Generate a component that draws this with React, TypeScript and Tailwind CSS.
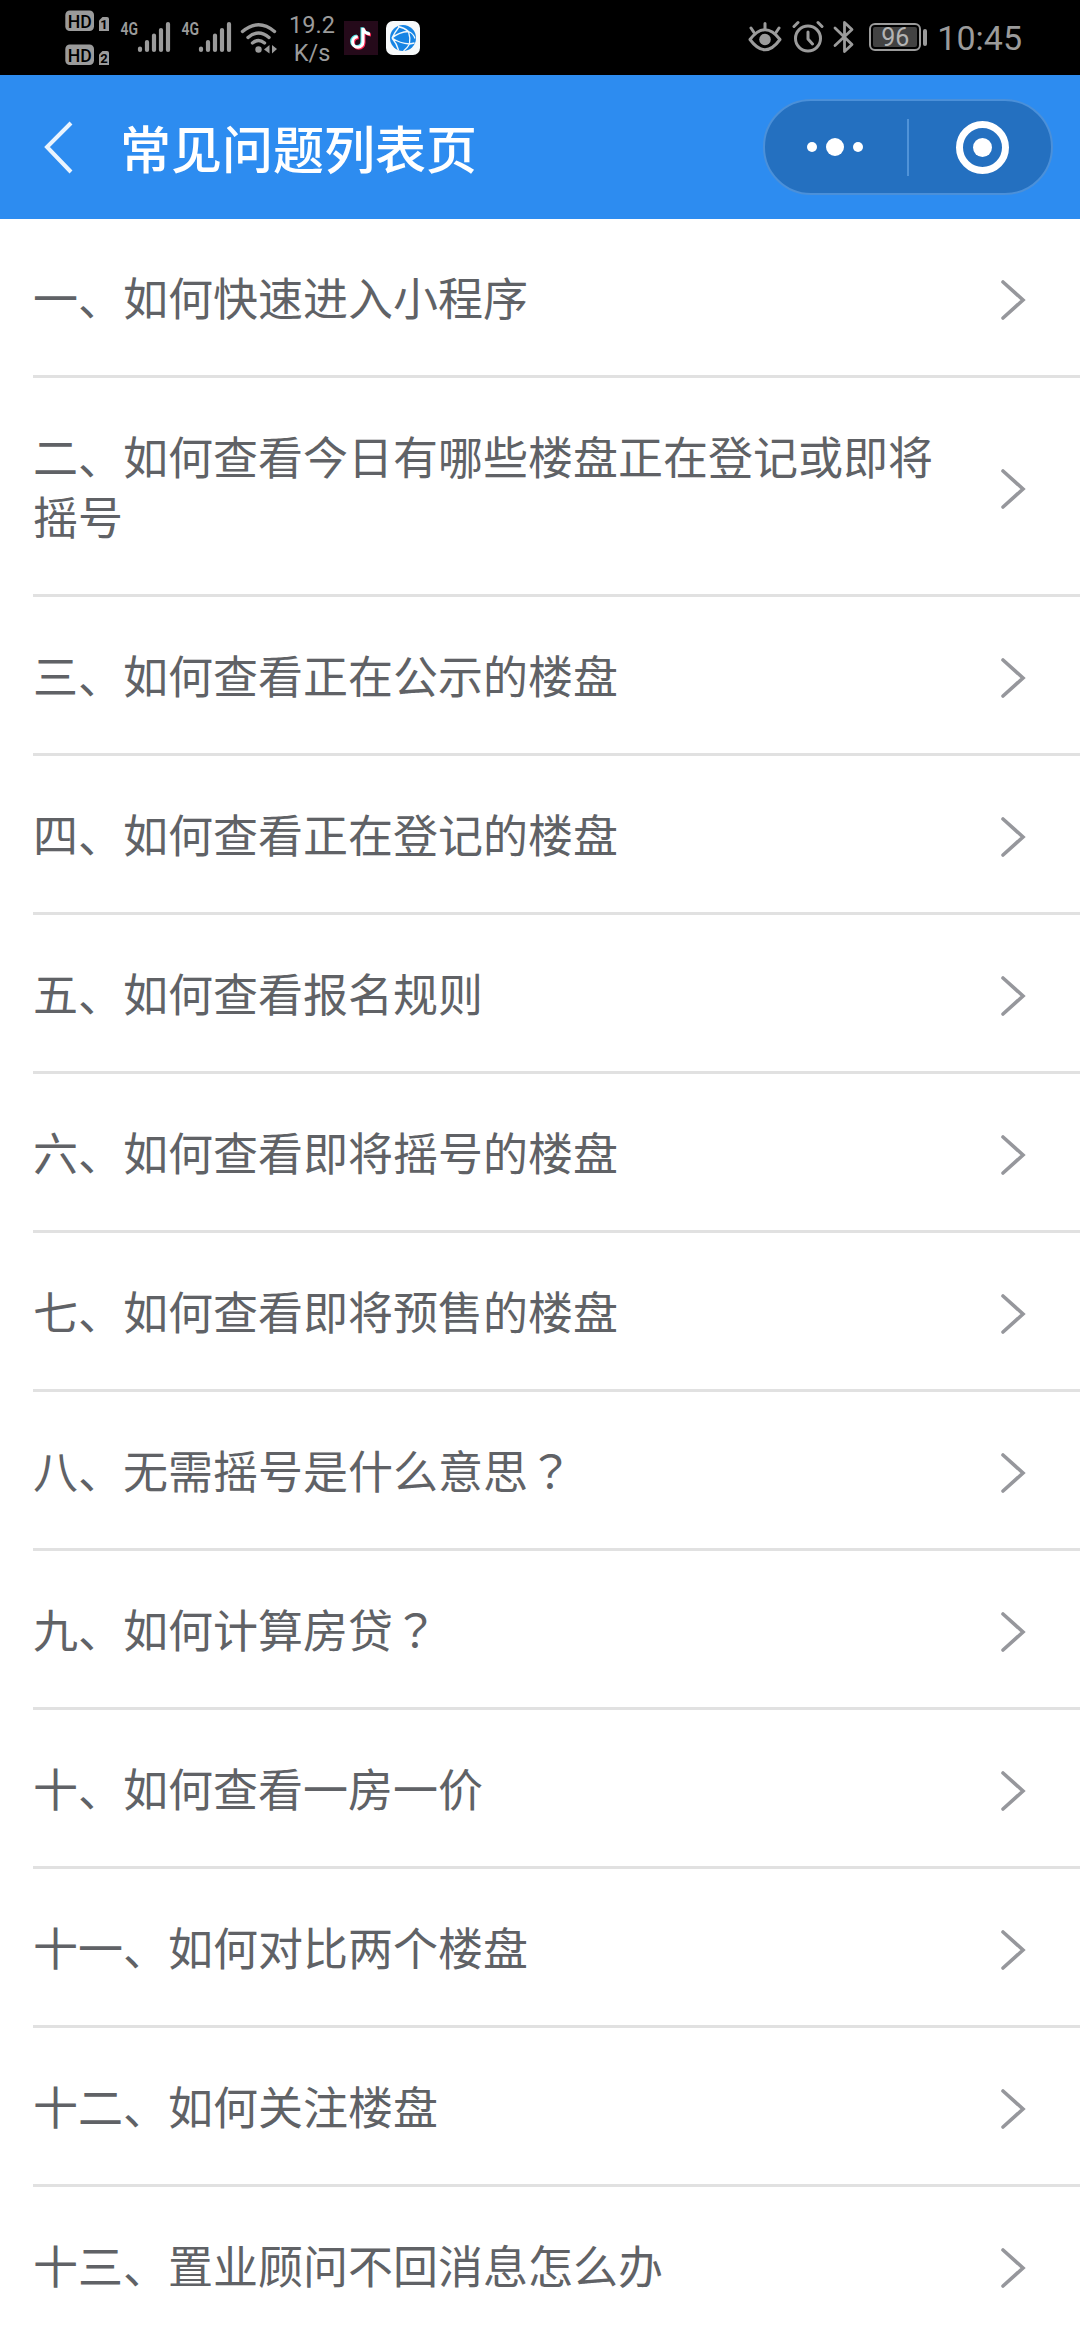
const QUESTIONS = [
  "一、如何快速进入小程序",
  "二、如何查看今日有哪些楼盘正在登记或即将摇号",
  "三、如何查看正在公示的楼盘",
  "四、如何查看正在登记的楼盘",
  "五、如何查看报名规则",
  "六、如何查看即将摇号的楼盘",
  "七、如何查看即将预售的楼盘",
  "八、无需摇号是什么意思？",
  "九、如何计算房贷？",
  "十、如何查看一房一价",
  "十一、如何对比两个楼盘",
  "十二、如何关注楼盘",
  "十三、置业顾问不回消息怎么办",
];

function HdBadge({ sim }: { sim: string }) {
  return (
    <svg width="45" height="22" viewBox="0 0 45 22">
      <rect x="0.3" y="0.5" width="28.7" height="20.5" rx="4.5" fill="#9b9b9b" />
      <text x="14.7" y="17.5" textAnchor="middle" fontSize="19" fontWeight="500" textLength="24" lengthAdjust="spacingAndGlyphs" fill="#000">
        HD
      </text>
      <path d="M34 10.5 37.5 7H42q2 0 2 2v12H34z" fill="#9b9b9b" />
      <text x="39" y="19" textAnchor="middle" fontSize="13" fontWeight="700" fill="#000">
        {sim}
      </text>
    </svg>
  );
}

function Signal() {
  return (
    <svg width="51" height="40" viewBox="0 -6 51 40">
      <text x="0.5" y="15" fontSize="18.5" fontWeight="600" textLength="17.5" lengthAdjust="spacingAndGlyphs" fill="#9b9b9b">
        4G
      </text>
      <path d="M20 28.500v1.500M27 22v8M34 15.500v14.500M41 10v20M48 4v26" stroke="#9b9b9b" strokeWidth="4.200" strokeLinecap="round" />
    </svg>
  );
}

function Wifi() {
  return (
    <svg width="38" height="34" viewBox="0 0 38 34" fill="none" stroke="#9b9b9b" strokeWidth="3.400" strokeLinecap="round">
      <path d="M2.500 10.500Q18.500-3 34.500 10.500M8 16.500Q18.500 7.500 29 16.500M12.500 22Q18.500 17 24.500 22" />
      <circle cx="18.500" cy="28.500" r="3.200" fill="#9b9b9b" stroke="none" />
      <path d="M29.500 24v8.500l-5.500-4zM32 24v8.500l5-4.500z" fill="#9b9b9b" stroke="none" />
    </svg>
  );
}

const NOTE = "M19 7v14a5.200 5.200 0 1 1-5.200-5.200M19 7q1 5.500 7 6";

function TikTok() {
  return (
    <svg width="34" height="34" viewBox="0 0 34 34" fill="none" strokeWidth="3">
      <rect width="34" height="34" fill="#250a1a" />
      <path d={NOTE} stroke="#ff2b55" transform="translate(1 1)" />
      <path d={NOTE} stroke="#4fe3e6" transform="translate(-1 -.8)" />
      <path d={NOTE} stroke="#fff" />
    </svg>
  );
}

function Globe() {
  return (
    <svg width="34" height="34" viewBox="0 0 34 34" fill="none">
      <rect width="34" height="34" rx="7" fill="#f7f9fa" />
      <circle cx="17" cy="17" r="13" fill="#1684e4" />
      <path d="M12 5.500q6 1 10.500 5M22.500 10.500q5 2 6.500 7M6 17Q13 11 22.500 10.500M6 17q8 5.500 17.500 6M22.500 10.500q2 6 1 12.500M6 17q3-6 7-11M6 17q5 6 6.500 12M23.500 23q-2 4-6 7M23.500 23l5-1" stroke="#f1f8fc" strokeWidth="1.300" />
    </svg>
  );
}

function Eye() {
  return (
    <svg width="34" height="34" viewBox="0 0 34 34" fill="none" stroke="#9b9b9b" strokeWidth="3" strokeLinecap="round">
      <path d="M2 19.500Q17 0 32 19.500 17 40 2 19.500Z" strokeLinejoin="round" />
      <circle cx="17" cy="19.500" r="5.800" fill="#9b9b9b" stroke="none" />
      <path d="M17 3.500v5M3 8l3 4.500M31 8l-3 4.500" />
    </svg>
  );
}

function Alarm() {
  return (
    <svg width="32" height="34" viewBox="0 0 32 34" fill="none" stroke="#9b9b9b" strokeWidth="3" strokeLinecap="round">
      <circle cx="16" cy="18.500" r="12.500" />
      <path d="M16 12v7l4.500 5M2 6.500l4-4M30 6.500l-4-4" strokeLinejoin="round" />
    </svg>
  );
}

function Bluetooth() {
  return (
    <svg width="22" height="34" viewBox="0 0 22 34" fill="none" stroke="#9b9b9b" strokeWidth="2.800" strokeLinecap="round" strokeLinejoin="round">
      <path d="M2 8l17 16.500-7.500 7V2.500l7.500 7L2 25.500" />
    </svg>
  );
}

function Battery() {
  return (
    <div className="flex items-center gap-[2px]">
      <div className="h-[28px] w-[52px] rounded-[6px] border-2 border-[#9b9b9b] p-[2px]">
        <div className="flex h-full items-center justify-center rounded-[2px] bg-[#424242] text-[25px] leading-none text-[#b4b4b4]">
          96
        </div>
      </div>
      <div className="h-[17px] w-[4px] rounded-[2px] bg-[#9b9b9b]" />
    </div>
  );
}

function StatusBar() {
  return (
    <header className="flex h-[75px] items-start bg-black pr-[58px] pl-[65px] font-[Roboto,sans-serif] text-[#9b9b9b]">
      <div className="flex flex-col gap-[12px] pt-[10px]">
        <HdBadge sim="1" />
        <HdBadge sim="2" />
      </div>
      <div className="ml-[10px] flex gap-[10px] pt-[14px]">
        <Signal />
        <Signal />
      </div>
      <div className="ml-[8px] pt-[21px]">
        <Wifi />
      </div>
      <div className="ml-[11px] w-[46px] pt-[11px] text-center text-[23.5px] leading-[28px]">
        <div>19.2</div>
        <div>K/s</div>
      </div>
      <div className="ml-[9px] flex gap-[8px] pt-[21px]">
        <TikTok />
        <Globe />
      </div>
      <div className="ml-auto flex items-center pt-[19px]">
        <Eye />
        <div className="ml-[10px]">
          <Alarm />
        </div>
        <div className="mr-[14px] ml-[9px]">
          <Bluetooth />
        </div>
        <Battery />
        <span className="ml-[10px] pt-[2px] text-[34px] leading-[34px]">10:45</span>
      </div>
    </header>
  );
}

function NavBar({ title }: { title: string }) {
  return (
    <nav className="flex h-[144px] items-center bg-[#2d8cf0] pr-[27px] pl-[43px]">
      <svg width="32" height="54" viewBox="0 0 32 54" fill="none" stroke="#fff" strokeOpacity="0.9" strokeWidth="4">
        <path d="M28 3 4 27l24 25" />
      </svg>
      <h1 className="ml-[45px] text-[51px] leading-[60px] font-medium text-white">{title}</h1>
      <div className="ml-auto flex h-[96px] w-[290px] items-center rounded-full border-2 border-[#4b90d9] bg-[#2470c0]">
        <div className="flex w-[142px] items-center justify-center gap-[9px] pr-[2px]">
          <i className="size-[10px] rounded-full bg-white" />
          <i className="size-[18px] rounded-full bg-white" />
          <i className="size-[10px] rounded-full bg-white" />
        </div>
        <div className="h-[57px] w-[2px] bg-[#5093d8]" />
        <div className="flex w-[142px] items-center justify-center pl-[5px]">
          <div className="flex size-[53px] items-center justify-center rounded-full border-[7px] border-white">
            <i className="size-[19px] rounded-full bg-white" />
          </div>
        </div>
      </div>
    </nav>
  );
}

function Row({ question }: { question: string }) {
  const asks = question.endsWith("？");

  return (
    <li className="ml-[33px] flex items-center border-b-[3px] border-[#e1e1e1] py-[48px] pr-[54px]">
      <span className="w-[905px] text-[45px] leading-[60px] text-[#606266]">
        {asks ? question.slice(0, -1) : question}
        {/* the TC face centres the question mark in its cell */}
        {asks && (
          <span lang="zh-TW" className="font-['Noto_Sans_CJK_TC',sans-serif]">
            ？
          </span>
        )}
      </span>
      <svg className="mt-[6px] ml-auto" width="26" height="42" viewBox="0 0 26 42" fill="none" stroke="#96979c" strokeWidth="3.600" strokeLinecap="round">
        <path d="M3 3l20 18L3 39" />
      </svg>
    </li>
  );
}

export default function App() {
  return (
    <div
      lang="zh-CN"
      className="h-[2340px] w-[1080px] overflow-hidden bg-white font-['Noto_Sans_CJK_SC',sans-serif]"
    >
      <StatusBar />
      <NavBar title="常见问题列表页" />
      <ul>
        {QUESTIONS.map((question) => (
          <Row key={question} question={question} />
        ))}
      </ul>
    </div>
  );
}
